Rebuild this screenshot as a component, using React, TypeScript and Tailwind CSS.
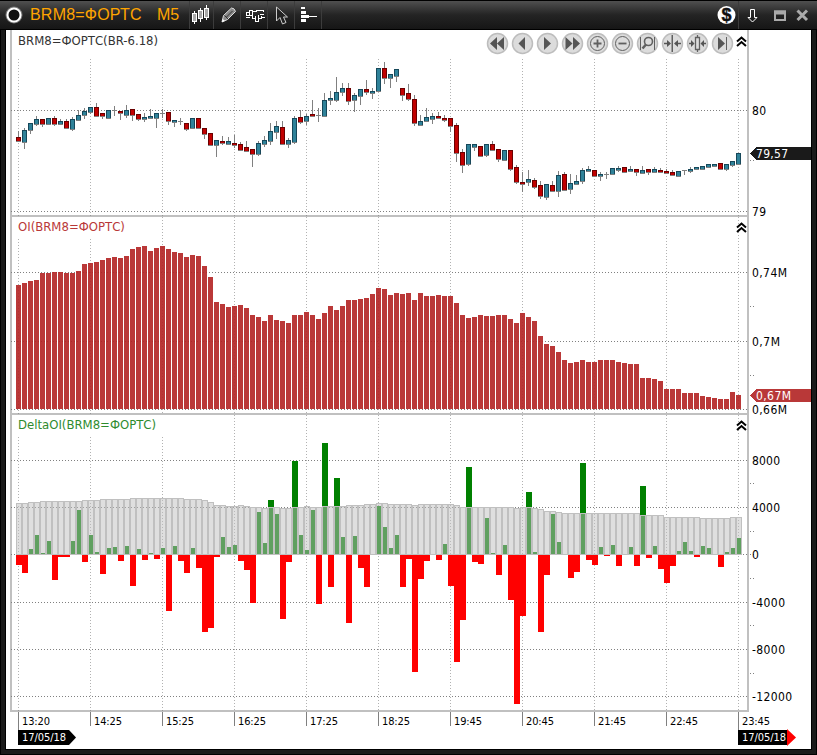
import type { ReactNode } from "react";

const UI_FONT = "'DejaVu Sans Condensed', 'DejaVu Sans', sans-serif";

// high, body top, body bottom, low, kind (1 = up, 0 = down, 2 = doji)
const candles = [
  [131, 137, 142, 142, 0], [128, 130, 143, 149, 1], [123, 123, 131, 134, 1], [116, 119, 125, 126, 1],
  [119, 119, 125, 127, 0], [118, 118, 125, 125, 1], [116, 118, 125, 126, 0], [119, 121, 125, 125, 1],
  [119, 121, 129, 129, 0], [117, 119, 130, 131, 1], [110, 115, 121, 121, 1], [108, 111, 116, 119, 1],
  [107, 107, 113, 114, 1], [103, 107, 117, 117, 0], [113, 113, 117, 119, 0], [110, 110, 119, 119, 1],
  [106, 110, 111, 116, 2], [111, 111, 114, 120, 0], [105, 110, 116, 118, 1], [109, 109, 116, 121, 0],
  [114, 114, 120, 121, 0], [113, 117, 120, 122, 1], [109, 116, 119, 119, 1], [113, 113, 119, 128, 1],
  [109, 113, 114, 118, 2], [112, 112, 122, 125, 0], [120, 120, 123, 127, 1], [118, 121, 122, 125, 2],
  [123, 123, 130, 131, 0], [118, 118, 129, 129, 1], [118, 118, 129, 129, 0], [128, 128, 135, 139, 0],
  [133, 133, 146, 146, 0], [140, 140, 146, 157, 1], [136, 141, 144, 145, 0], [137, 141, 145, 145, 1],
  [135, 143, 146, 148, 0], [142, 144, 151, 151, 0], [141, 147, 152, 152, 0], [149, 149, 155, 167, 0],
  [141, 143, 155, 156, 1], [136, 140, 145, 147, 1], [123, 131, 142, 145, 1], [121, 126, 133, 139, 1],
  [121, 127, 145, 145, 0], [138, 140, 145, 148, 1], [116, 118, 143, 144, 1], [110, 117, 123, 124, 0],
  [114, 116, 122, 125, 1], [100, 114, 117, 117, 0], [108, 115, 116, 122, 2], [93, 100, 117, 117, 1],
  [91, 98, 101, 105, 1], [77, 92, 101, 102, 1], [83, 88, 93, 96, 1], [83, 88, 102, 105, 0],
  [93, 95, 101, 112, 1], [89, 89, 97, 105, 1], [80, 89, 93, 95, 0], [88, 91, 94, 99, 1],
  [68, 68, 92, 92, 1], [62, 68, 79, 84, 0], [74, 74, 79, 88, 1], [69, 69, 77, 82, 1],
  [88, 88, 96, 101, 0], [84, 93, 100, 101, 0], [95, 99, 124, 126, 0], [115, 121, 126, 126, 1],
  [108, 117, 122, 122, 1], [113, 116, 120, 124, 1], [112, 116, 119, 119, 0], [115, 118, 121, 122, 0],
  [118, 118, 127, 132, 0], [123, 125, 154, 162, 0], [149, 152, 166, 173, 0], [144, 144, 165, 166, 1],
  [144, 144, 148, 151, 1], [146, 146, 157, 157, 0], [144, 144, 156, 157, 1], [141, 144, 151, 151, 0],
  [149, 149, 160, 162, 0], [150, 150, 161, 161, 1], [150, 150, 170, 171, 0], [165, 167, 183, 184, 0],
  [172, 182, 185, 192, 0], [170, 179, 183, 186, 1], [178, 180, 188, 189, 0], [181, 185, 197, 199, 0],
  [184, 184, 198, 200, 1], [181, 185, 192, 192, 0], [171, 175, 192, 197, 1], [172, 174, 191, 191, 0],
  [174, 183, 190, 194, 1], [175, 181, 185, 185, 1], [168, 170, 182, 184, 1], [166, 169, 172, 172, 1],
  [170, 170, 177, 177, 0], [172, 174, 177, 181, 1], [172, 174, 175, 179, 2], [168, 168, 175, 175, 1],
  [166, 168, 171, 172, 1], [167, 167, 173, 173, 0], [166, 169, 172, 172, 1], [169, 169, 173, 176, 0],
  [166, 170, 174, 174, 1], [169, 169, 173, 175, 0], [167, 169, 173, 173, 1], [168, 170, 173, 173, 0],
  [169, 171, 174, 174, 0], [170, 172, 176, 176, 0], [171, 171, 177, 177, 1], [170, 170, 171, 175, 2],
  [167, 169, 172, 173, 1], [167, 167, 170, 170, 1], [166, 166, 170, 170, 1], [164, 164, 168, 168, 1],
  [164, 164, 167, 167, 1], [163, 163, 170, 170, 0], [164, 164, 170, 171, 1], [161, 161, 166, 167, 1],
  [153, 153, 165, 165, 1],
];

const oiTops = [
  285, 283, 281, 280, 273, 273, 272, 272, 273, 273, 271, 264, 263, 262, 260, 258, 257, 258, 256, 249,
  247, 246, 251, 248, 246, 249, 252, 253, 257, 255, 256, 266, 277, 302, 304, 307, 306, 305, 308, 315,
  317, 321, 315, 320, 321, 323, 315, 315, 312, 315, 319, 313, 306, 310, 306, 300, 300, 299, 298, 294,
  288, 289, 295, 293, 294, 293, 300, 293, 296, 296, 295, 296, 296, 303, 315, 318, 317, 315, 316, 316,
  315, 315, 319, 323, 313, 317, 321, 336, 344, 346, 352, 360, 363, 362, 360, 362, 362, 360, 360, 360,
  362, 363, 364, 364, 378, 378, 379, 381, 389, 389, 389, 393, 393, 393, 396, 397, 398, 399, 399, 392,
  395,
];

// bar end: above 554 is a positive delta, below 555 a negative one
const deltaEnds = [
  565, 573, 549, 535, 553, 541, 580, 557, 557, 541, 510, 562, 535, 552, 574, 548, 547, 561, 546, 586,
  549, 560, 553, 559, 548, 611, 546, 561, 573, 548, 568, 632, 628, 557, 537, 547, 545, 561, 570, 603,
  512, 543, 500, 514, 619, 562, 461, 535, 550, 510, 604, 443, 587, 478, 537, 623, 536, 568, 587, 555,
  506, 527, 548, 535, 587, 559, 672, 579, 561, 555, 560, 544, 586, 662, 620, 467, 562, 564, 518, 553,
  575, 545, 600, 704, 616, 492, 552, 632, 575, 514, 542, 555, 578, 572, 463, 560, 565, 547, 556, 545,
  566, 555, 547, 566, 486, 558, 546, 569, 583, 566, 551, 542, 551, 557, 546, 548, 555, 567, 552, 548,
  538,
];

// runs of [top, count] for the grey background histogram
const levelRuns = [
  [503, 2], [502, 2], [501, 7], [500, 3], [499, 5], [498, 9], [499, 3], [500, 1], [502, 1], [505, 2],
  [506, 2], [505, 1], [506, 1], [507, 2], [508, 1], [507, 2], [508, 2], [507, 2], [506, 1], [507, 2],
  [506, 4], [505, 3], [504, 2], [503, 2], [504, 4], [505, 1], [504, 6], [505, 1], [507, 9], [508, 1],
  [507, 2], [508, 1], [509, 1], [511, 2], [512, 1], [513, 13], [515, 4], [517, 6], [518, 5], [517, 2],
];
const levelTops = levelRuns.flatMap(([top, count]) => Array.from({ length: count }, () => top));

const gridX = [18, 90, 162, 234, 306, 378, 450, 522, 594, 666, 738];
const times = ["13:20", "14:25", "15:25", "16:25", "17:25", "18:25", "19:45", "20:45", "21:45", "22:45", "23:45"];

type PanelProps = {
  top: number;
  height: number;
  title: string;
  titleClass: string;
  collapseClass: string;
  gridTops: number[];
  lines: number[];
  ticks: number[];
  labels: [string, number, number][];
  children: ReactNode;
  tag?: ReactNode;
  overlay?: ReactNode;
};

function Panel({ top, height, title, titleClass, collapseClass, gridTops, lines, ticks, labels, children, tag, overlay }: PanelProps) {
  const bottom = top + height;
  return (
    <section className="relative" style={{ height }}>
      <svg className="block overflow-visible" width="805" height={height} viewBox={`6 ${top} 805 ${height}`} shapeRendering="crispEdges">
        <rect x="10" y={top} width="2" height={height} fill="#c0c0c0" />
        <rect x="747" y={top} width="2" height={height} fill="#c0c0c0" />
        <rect x="10" y={bottom - 2} width="739" height="2" fill="#c0c0c0" />
        <g stroke="#808080" strokeWidth="1" strokeDasharray="1 2">
          {gridX.map((x, i) => (
            <line key={x} x1={x + 0.5} x2={x + 0.5} y1={gridTops[i] ?? gridTops[gridTops.length - 1]} y2={bottom} opacity="0.6" />
          ))}
          {lines.map((y) => (
            <line key={y} x1="11" x2="747" y1={y + 0.5} y2={y + 0.5} />
          ))}
          {ticks.map((y) => (
            <line key={y} x1="750" x2="754" y1={y + 0.5} y2={y + 0.5} />
          ))}
        </g>
        {children}
        <g fontFamily={UI_FONT} fontSize="12" fill="#000">
          {labels.map(([text, y, width]) => (
            <text key={text} x="752" y={y} textLength={width}>{text}</text>
          ))}
        </g>
        {tag}
      </svg>
      <h2 className={`absolute left-3 text-[13px] leading-4 ${titleClass}`}>{title}</h2>
      <button className={`absolute left-[730px] ${collapseClass}`} aria-label="collapse">
        <svg className="block" width="11" height="11" viewBox="0 0 11 11" fill="none" stroke="#000" strokeWidth="2">
          <path d="M1 5.5 5.5 1.5 10 5.5M1 10 5.5 6 10 10" />
        </svg>
      </button>
      {overlay}
    </section>
  );
}

const navIcons: { name: string; icon: ReactNode }[] = [
  { name: "rewind", icon: <path d="M11 5v13L4 11.500zM18 5v13L11 11.500z" fill="#555" /> },
  { name: "back", icon: <path d="M14 5v13L7.500 11.500z" fill="#555" /> },
  { name: "forward", icon: <path d="M8 5v13l7-6.500z" fill="#555" /> },
  { name: "fast forward", icon: <path d="M4.500 5v13l7-6.500zM12 5v13l7-6.500z" fill="#555" /> },
  { name: "zoom in", icon: <g stroke="#606060" fill="none"><circle cx="11.500" cy="11.500" r="7" /><path d="M7.500 11.500h8M11.500 7.500v8" strokeWidth="1.800" /></g> },
  { name: "zoom out", icon: <g stroke="#606060" fill="none"><circle cx="11.500" cy="11.500" r="7" /><path d="M7.500 11.500h8" strokeWidth="1.800" /></g> },
  { name: "zoom range", icon: <g stroke="#606060" fill="none"><path d="M4.500 5v13M18.500 5v13" /><circle cx="12.500" cy="9.500" r="4" strokeWidth="1.600" /><path d="M10 12.500 6.500 16.500" strokeWidth="2.500" /></g> },
  { name: "compress", icon: <g><path d="M10.500 3v17H12V3z" fill="#606060" /><path d="M6 8v7l4-3.500zM17 8v7l-4-3.500z" fill="#555" /><path d="M3 10.800h3v1.500H3zM17 10.800h3v1.500h-3z" fill="#555" /></g> },
  { name: "fit bars", icon: <g><path d="M9.500 5.500h4v12h-4zM11.500 3v2.500M11.500 17.500V20" fill="none" stroke="#606060" strokeWidth="1.300" /><path d="M5 8v7l3.500-3.500zM18 8v7l-3.500-3.500z" fill="#555" /><path d="M3 10.800h3v1.500H3zM17 10.800h3v1.500h-3z" fill="#555" /></g> },
  { name: "last", icon: <g><path d="M7 5v13l7-6.500z" fill="#555" /><path d="M15.500 5v13" stroke="#606060" /></g> },
];

function NavButtons() {
  return (
    <div className="absolute left-[480px] top-0.5 flex gap-[2px]">
      {navIcons.map(({ name, icon }) => (
        <button key={name} aria-label={name}>
          <svg className="block" width="23" height="23" viewBox="0 0 23 23">
            <circle cx="11.500" cy="11.500" r="10" fill="#dcdcdc" stroke="#bdbdbd" strokeWidth="1.500" />
            {icon}
          </svg>
        </button>
      ))}
    </div>
  );
}

function TitleBar() {
  return (
    <header className="flex h-[30px] items-stretch border-y border-black bg-gradient-to-b from-[#505050] via-[#242424] to-[#161616]">
      <svg className="block" width="30" height="28" viewBox="0 1 30 28" fill="none">
        <circle cx="14" cy="15" r="7" stroke="#777" strokeWidth="3" />
        <circle cx="14" cy="15" r="6.500" stroke="#fff" strokeWidth="2" fill="#111" />
      </svg>
      <h1 className="w-[127px] whitespace-pre text-[16px] leading-[27px] tracking-[0.2px] text-[#ffa500]">BRM8=ФОРТС</h1>
      <span className="w-8 text-[16px] leading-[27px] text-[#ffa500]">M5</span>
      <button className="border-l border-[#3c3c3c]" aria-label="chart type">
        <svg className="block" width="23" height="28" viewBox="190 1 23 28" shapeRendering="crispEdges">
          <path d="M194.500 11v13M200.500 8v14M206.500 5v15" stroke="#fff" />
          <path d="M192.500 13.500h4v8h-4zM198.500 10.500h4v8h-4zM204.500 8.500h4v9h-4z" fill="#aaa" stroke="#fff" />
        </svg>
      </button>
      <button className="border-l border-[#3c3c3c]" aria-label="draw">
        <svg className="block" width="26" height="28" viewBox="214 1 26 28">
          <path d="m222 22 1.500-6.500 8-7.500q3 0 4 3.500l-8 8z" fill="#888" stroke="#ddd" />
          <path d="m224.500 15.500 4 4M226.500 17l6-6" stroke="#333" />
          <path d="m222 22 .8-3 2.200 2z" fill="#fff" />
        </svg>
      </button>
      <button className="border-l border-[#3c3c3c]" aria-label="indicators">
        <svg className="block" width="26" height="28" viewBox="241 1 26 28" fill="none" stroke="#fff" shapeRendering="crispEdges">
          <path d="M246.500 15.500v-3h3v-2h3v5M249.500 12v3M246 15.500h6M252.500 15.500v3h3v-3M255.500 18v3h3v-6M258.500 18.500h3v-3M252.500 11.500h4v-1.500h7v2M246 17.500h4M260 14.500h4M261.500 17.500h3" />
        </svg>
      </button>
      <button className="border-l border-[#3c3c3c]" aria-label="cursor">
        <svg className="block" width="26" height="28" viewBox="268 1 26 28">
          <path d="M276.500 7v14l3.500-3.500 2.500 6.500 3.500-1.500-2.500-5.500h4z" fill="#222" stroke="#ccc" />
        </svg>
      </button>
      <button className="border-x border-[#3c3c3c]" aria-label="profile">
        <svg className="block" width="26" height="28" viewBox="295 1 26 28" fill="#fff" shapeRendering="crispEdges">
          <path d="M301 7h4v2h-4zM301 11h5v3h-5zM301 15h8v3h-8zM301 19h5v3h-5zM309 16h8v1h-8z" />
        </svg>
      </button>
      <div className="ml-auto flex">
        <svg className="block" width="24" height="28" viewBox="714 1 24 28">
          <circle cx="726.500" cy="15" r="9" fill="#fff" />
          <text x="726.500" y="21" textAnchor="middle" fontFamily="'Liberation Sans', sans-serif" fontWeight="700" fontSize="18" fill="#111" stroke="#111" strokeWidth="0.400">$</text>
        </svg>
        <svg className="block border-l border-[#3c3c3c]" width="27" height="28" viewBox="739 1 26 28" fill="none" stroke="#fff">
          <path d="M750.500 9.500h4v8h2.500l-4.500 4.500-4.500-4.500h2.500z" />
        </svg>
        <svg className="block" width="52" height="28" viewBox="765 1 52 28" fill="none" stroke="#aaa">
          <rect x="775" y="11.500" width="10" height="8.500" strokeWidth="2" />
          <path d="M774 12.500h12" strokeWidth="4" />
          <path d="m797.500 10.500 9.500 9.500m0-9.500-9.500 9.500" strokeWidth="3" />
        </svg>
      </div>
    </header>
  );
}

function TimeAxis() {
  return (
    <svg className="block" width="805" height="37" viewBox="6 712 805 37">
      <g fill="#808080">
        {gridX.map((x) => (
          <rect key={x} x={x} y="712" width="1" height={x === 18 || x === 738 ? 18 : 14} />
        ))}
      </g>
      <g fontFamily={UI_FONT} fontSize="11" fill="#000">
        {times.map((time, i) => (
          <text key={time} x={gridX[i] + 4} y="725" textLength="28">{time}</text>
        ))}
      </g>
      <path d="M18 730h51l7 7.500-7 7.500H18z" fill="#000" />
      <path d="M738 730h49v15h-49z" fill="#000" />
      <path d="M787 729v17l9-8.500z" fill="#f00" />
      <g fontFamily={UI_FONT} fontSize="11" fill="#fff">
        <text x="22" y="741" textLength="44">17/05/18</text>
        <text x="742" y="741" textLength="44">17/05/18</text>
      </g>
    </svg>
  );
}

export default function App() {
  return (
    <main className="h-[755px] w-[817px] overflow-hidden bg-[#1a1a1a] font-['Liberation_Sans',sans-serif]">
      <TitleBar />
      <div className="flex h-[725px] flex-col border-x border-b border-black px-1 pb-1">
        <div className="h-[720px] border-x border-b border-black bg-white font-['DejaVu_Sans_Condensed','DejaVu_Sans',sans-serif]">
          <Panel
            top={30}
            height={187}
            title="BRM8=ФОРТС(BR-6.18)"
            titleClass="top-[3px] text-[#333]"
            collapseClass="top-[6px]"
            gridTops={[59]}
            lines={[110, 211]}
            ticks={[160]}
            labels={[["80", 115, 14], ["79", 216, 14]]}
            overlay={<NavButtons />}
            tag={
              <g>
                <path d="M750 153.500 756 147h55v13h-55z" fill="#1a1a1a" />
                <text x="756" y="158" textLength="32" fontFamily={UI_FONT} fontSize="12" fill="#fff">79,57</text>
              </g>
            }
          >
            {candles.map(([high, top, bottom, low, kind], i) => {
              const x = 18 + i * 6;
              return (
                <g key={i}>
                  <rect x={x} y={high} width="1" height={low - high} fill="#808080" />
                  {kind !== 2 && (
                    <>
                      <rect x={x - 2} y={top} width="5" height={bottom - top - 1} fill={kind ? "#17485a" : "#6a0000"} />
                      <rect x={x - 1} y={top + 1} width="3" height={Math.max(bottom - top - 2, 0)} fill={kind ? "#2f8299" : "#c00000"} />
                    </>
                  )}
                  <rect x={x - 2} y={bottom - 1} width="5" height="1" fill="#808080" />
                </g>
              );
            })}
          </Panel>

          <Panel
            top={217}
            height={198}
            title="OI(BRM8=ФОРТС)"
            titleClass="top-[2px] text-[#b93838]"
            collapseClass="top-[5px]"
            gridTops={[239, 239, 217]}
            lines={[272, 341, 409]}
            ticks={[306, 375]}
            labels={[["0,74M", 277, 35], ["0,7M", 346, 28], ["0,66M", 414, 35]]}
            tag={
              <g>
                <path d="M750 395.500 756 389h55v13h-55z" fill="#b93838" />
                <text x="756" y="400" textLength="35" fontFamily={UI_FONT} fontSize="12" fill="#fff">0,67M</text>
              </g>
            }
          >
            {oiTops.map((top, i) => (
              <rect key={i} x={16 + i * 6} y={top} width="5" height={409 - top} fill="#b22222" fillOpacity="0.9" />
            ))}
          </Panel>

          <Panel
            top={415}
            height={297}
            title="DeltaOI(BRM8=ФОРТС)"
            titleClass="top-[2px] text-[#2e8b2e]"
            collapseClass="top-[5px]"
            gridTops={[437, 437, 437, 415]}
            lines={[460, 507, 554, 602, 649, 696]}
            ticks={[483, 531, 554, 578, 625, 673]}
            labels={[["8000", 465, 28], ["4000", 512, 28], ["0", 559, 7], ["-4000", 607, 33], ["-8000", 654, 33], ["-12000", 701, 40]]}
          >
            {deltaEnds.map((end, i) =>
              end < 555 ? (
                <rect key={i} x={16 + i * 6} y={end} width="6" height={554 - end} fill="#008000" />
              ) : (
                <rect key={i} x={16 + i * 6} y="555" width="6" height={end - 555} fill="#f00" />
              )
            )}
            {levelTops.map((top, i) => (
              <g key={i} fill="#c0c0c0">
                <rect x={17 + i * 6} y={top + 1} width="4" height={553 - top} fillOpacity="0.5" />
                <path d={`M${16 + i * 6} ${top}h6v${555 - top}h-6zm1 1v${553 - top}h4v-${553 - top}z`} fillRule="evenodd" />
              </g>
            ))}
          </Panel>
          <TimeAxis />
        </div>
      </div>
    </main>
  );
}
